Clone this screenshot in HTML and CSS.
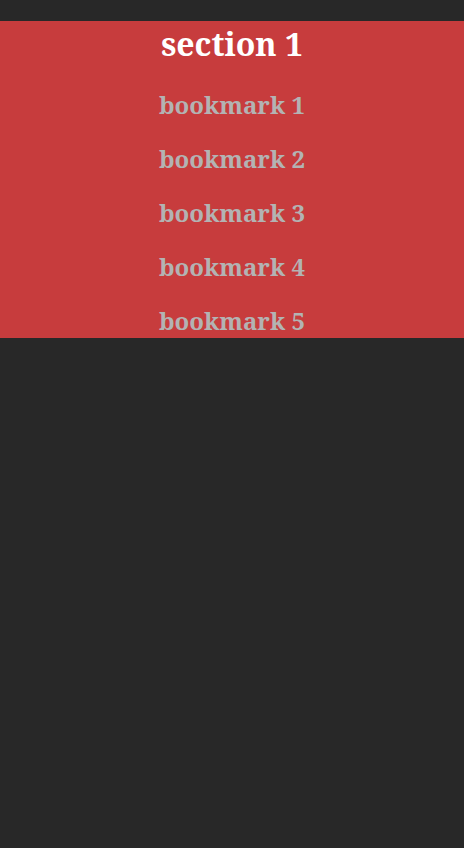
FILE: index.html
```html
<!DOCTYPE html>
<html>
<head>
<meta charset="utf-8">
<link rel="stylesheet" href="styles.css">
</head>
<body>
<div class="section">
  <h1 class="title">section 1</h1>
  <ul class="list">
    <li class="item">bookmark 1</li>
    <li class="item">bookmark 2</li>
    <li class="item">bookmark 3</li>
    <li class="item">bookmark 4</li>
    <li class="item">bookmark 5</li>
  </ul>
</div>
</body>
</html>
```
FILE: styles.css
```css
html, body {
  margin: 0;
  padding: 0;
  background: #282828;
}
body {
  padding-top: 21px;
  font-family: "Noto Serif", "DejaVu Serif", serif;
  font-weight: bold;
}
.section {
  background: #c73c3d;
  height: 317px;
  overflow: hidden;
  text-align: center;
}
.title {
  margin: 0;
  font-size: 32px;
  line-height: 46px;
  color: #ffffff;
}
.list {
  list-style: none;
  margin: 0;
  padding: 11px 0 0;
}
.item {
  font-size: 24px;
  line-height: 54px;
  color: #b3b3b3;
}
```
